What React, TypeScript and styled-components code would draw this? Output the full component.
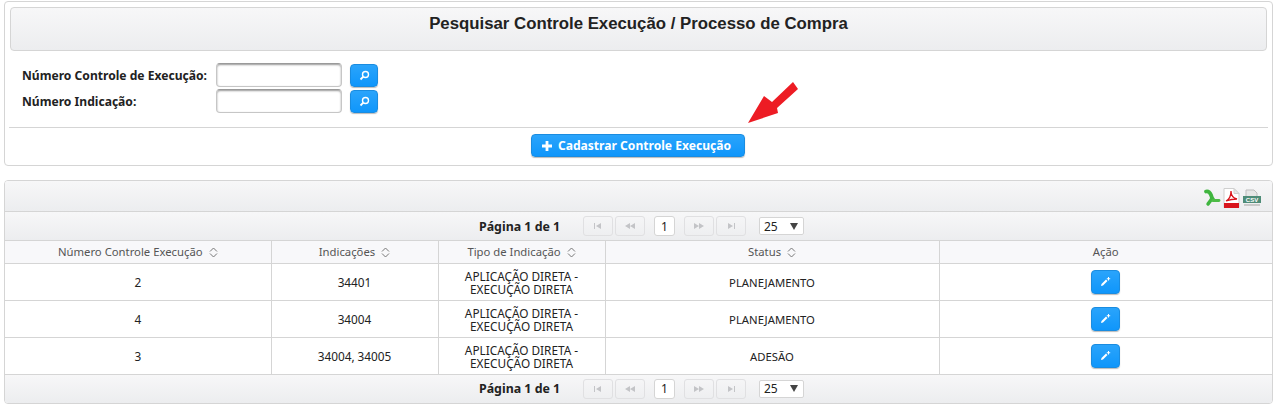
import React from "react";
import styled, { createGlobalStyle, css } from "styled-components";

const Global = createGlobalStyle`
  html, body { margin: 0; padding: 0; background: #fff; }
  body { font-family: "Noto Sans", "DejaVu Sans", sans-serif; font-size: 12px; color: #222; }
`;
const barGradient = css`background: linear-gradient(to bottom, #f7f7f8, #ecedef);`;
const blueGradient = css`background: linear-gradient(to bottom, #2aa4fb, #0f96fb);`;

const Page = styled.div`
  width: 1279px; height: 410px; padding: 1px 6px 0 4px; box-sizing: border-box; overflow: hidden;
  display: flex; flex-direction: column; gap: 14px;
`;
const SearchPanel = styled.section`
  position: relative; height: 165px; box-sizing: border-box; border: 1px solid #d5d5d5; border-radius: 4px;
  padding: 5px 5px 0 5px; display: flex; flex-direction: column;
`;
const TitleBar = styled.header`
  ${barGradient}
  height: 44px; box-sizing: border-box; border: 1px solid #d5d5d5; border-radius: 4px;
  display: flex; justify-content: center; padding-top: 6px;
`;
const Title = styled.h1`
  margin: 0; font: bold 16.8px/20px "Liberation Sans", Arial, sans-serif; color: #222;
`;
const Form = styled.div`
  display: grid; grid-template-columns: 194px 126px 30px; padding: 11px 0 0 12px;
  grid-auto-rows: 26px; align-items: center; height: 76px; box-sizing: border-box; align-content: start;
`;
const Label = styled.label`
  font-weight: 700; font-size: 12.1px; color: #222;
`;
const Input = styled.input`
  width: 126px; height: 24px; box-sizing: border-box; border: 1px solid #c6c6c6; border-top-color: #9a9a9a;
  border-radius: 4px; box-shadow: inset 0 1px 2px #999; background: #fff; padding: 0;
`;
const SearchButton = styled.button`
  ${blueGradient}
  width: 28px; height: 23px; margin-left: 8px; border: 1px solid #1a8ce0; border-radius: 4px; padding: 0;
  display: flex; align-items: center; justify-content: center; box-shadow: 0 1px 1px #bbb;
`;
const Divider = styled.hr`
  margin: 0 -1px; border: 0; border-top: 1px solid #d5d5d5;
`;
const Actions = styled.div`
  display: flex; justify-content: center; padding: 6px 2px 0 0;
`;
const PrimaryButton = styled.button`
  ${blueGradient}
  width: 214px; height: 23px; border: 1px solid #1a8ce0; border-radius: 4px; padding: 0 2px 0 0;
  display: flex; align-items: center; justify-content: center; gap: 6px; box-shadow: 0 1px 1px #bbb;
  color: #fff; font: 700 12.1px "Noto Sans", "DejaVu Sans", sans-serif;
`;
const Arrow = styled.svg`
  position: absolute; left: 738px; top: 74px; width: 60px; height: 50px;
`;
const ResultsPanel = styled.section`
  height: 224px; box-sizing: border-box; border: 1px solid #d5d5d5; border-radius: 4px; overflow: hidden;
  display: flex; flex-direction: column;
`;
const Toolbar = styled.div`
  ${barGradient}
  height: 31px; flex: none; box-sizing: border-box; border-bottom: 1px solid #d5d5d5;
  display: flex; justify-content: flex-end; align-items: center; gap: 2px; padding: 4px 10px 0 0;
`;
const Pager = styled.div<{ $bottom?: boolean }>`
  ${barGradient}
  height: ${(p) => (p.$bottom ? "28px" : "29px")}; flex: none; box-sizing: border-box;
  ${(p) => (p.$bottom ? "" : "border-bottom: 1px solid #d5d5d5;")}
  display: flex; align-items: center; padding-left: 474px;
`;
const PageInfo = styled.span`
  font-weight: 700; font-size: 12.4px; color: #222; width: 104px;
`;
const PageNav = styled.button`
  width: 30px; height: 20px; margin-right: 2px; box-sizing: border-box; border: 1px solid #e0e0e2; border-radius: 3px;
  background: transparent; padding: 0; display: flex; align-items: center; justify-content: center;
`;
const CurrentPage = styled.span`
  width: 21px; height: 20px; box-sizing: border-box; border: 1px solid #d5d5d5; border-radius: 3px; background: #fff;
  margin: 0 9px 0 7px; display: flex; align-items: center; justify-content: center; font-size: 12px; color: #222;
`;
const PageSize = styled.span`
  width: 45px; height: 18px; margin-left: 11px; box-sizing: border-box; border: 1px solid #d5d5d5; border-radius: 2px; background: #fff;
  display: flex; align-items: center; justify-content: space-between; padding: 0 5px 0 4px; font-size: 12px; color: #222;
`;
const Table = styled.table`
  width: 100%; table-layout: fixed; border-collapse: collapse; flex: none;
`;
const Th = styled.th`
  height: 22px; padding: 0; box-sizing: border-box; font-weight: 400; font-size: 11.3px; color: #555; background: #f8f8fa;
  border-right: 1px solid #d5d5d5; border-bottom: 1px solid #d5d5d5; &:last-child { border-right: 0; }
`;
const Td = styled.td`
  height: 37px; padding: 2px 0 0; box-sizing: border-box; text-align: center; font-size: 11.8px; line-height: 13px; color: #222;
  border-right: 1px solid #d5d5d5; border-bottom: 1px solid #d5d5d5; &:last-child { border-right: 0; }
`;
const Status = styled.span`
  font-size: 11.3px;
`;
const SortMark = styled.svg`
  margin-left: 6px; vertical-align: -2px;
`;
const EditButton = styled.button`
  ${blueGradient}
  width: 29px; height: 24px; margin-bottom: 2px; border: 1px solid #1a8ce0; border-radius: 4px; padding: 0;
  display: inline-flex; align-items: center; justify-content: center; vertical-align: middle; box-shadow: 0 1px 1px #bbb;
`;

const Lens = () => (
  <svg width="11" height="11" viewBox="0 0 11 11" fill="none">
    <circle cx="6.5" cy="4.5" r="3" stroke="#fff" strokeWidth="1.4" />
    <path d="M4.3 6.7 1.5 9.5" stroke="#fff" strokeWidth="1.8" />
  </svg>
);
const Sort = () => (
  <SortMark width="9" height="11" viewBox="0 0 9 11" fill="none">
    <path d="M1 4.5 4.5 1 8 4.5M1 6.5 4.5 10 8 6.5" stroke="#777" strokeWidth="1" />
  </SortMark>
);
const Pencil = () => (
  <svg width="11" height="11" viewBox="0 0 11 11" fill="none">
    <path d="M1 10 1.5 8 6 3.5 7.5 5 3 9.5Z" fill="#fff" />
    <path d="M8 1h1v1.2h1.2v1H9v1.2H8V3.2H6.8v-1H8Z" fill="#fff" />
  </svg>
);
const NavIcon = ({ d }: { d: string }) => (
  <svg width="12" height="8" viewBox="0 0 12 8"><path d={d} fill="#c3c4c7" /></svg>
);
const nav = {
  first: "M2 1h1v6H2ZM9 1v6L4 4Z",
  prev: "M6 1v6L1 4ZM11 1v6L6 4Z",
  next: "M1 1v6l5-3ZM6 1v6l5-3Z",
  last: "M3 1v6l5-3ZM9 1h1v6H9Z",
};
const Pagination = ({ bottom }: { bottom?: boolean }) => (
  <Pager $bottom={bottom}>
    <PageInfo>Página 1 de 1</PageInfo>
    <PageNav><NavIcon d={nav.first} /></PageNav>
    <PageNav><NavIcon d={nav.prev} /></PageNav>
    <CurrentPage>1</CurrentPage>
    <PageNav><NavIcon d={nav.next} /></PageNav>
    <PageNav><NavIcon d={nav.last} /></PageNav>
    <PageSize>25<svg width="8" height="7" viewBox="0 0 8 7"><path d="M0 0h8L4 7Z" fill="#444" /></svg></PageSize>
  </Pager>
);
const rows = [
  ["2", "34401", "PLANEJAMENTO"],
  ["4", "34004", "PLANEJAMENTO"],
  ["3", "34004, 34005", "ADESÃO"],
];

export default function App() {
  return (
    <Page>
      <Global />
      <SearchPanel>
        <TitleBar><Title>Pesquisar Controle Execução / Processo de Compra</Title></TitleBar>
        <Form>
          <Label>Número Controle de Execução:</Label>
          <Input />
          <SearchButton><Lens /></SearchButton>
          <Label>Número Indicação:</Label>
          <Input />
          <SearchButton><Lens /></SearchButton>
        </Form>
        <Divider />
        <Actions>
          <PrimaryButton>
            <svg width="10" height="10" viewBox="0 0 10 10"><path d="M3.6 0h2.8v3.6H10v2.8H6.4V10H3.6V6.4H0V3.6h3.6Z" fill="#fff" /></svg>
            Cadastrar Controle Execução
          </PrimaryButton>
        </Actions>
        <Arrow viewBox="0 0 60 50">
          <path d="M5 47 21 20 29 26 50 6 55 13 34 32 35 37Z" fill="#ed1c24" />
        </Arrow>
      </SearchPanel>
      <ResultsPanel>
        <Toolbar>
          <svg width="18" height="18" viewBox="0 0 18 18" fill="none">
            <path d="M3 2.500C5.500 2 7 3.500 8 6c.5 2 1 3.500 2.500 5" stroke="#3fb53f" strokeWidth="3.800" strokeLinecap="round" />
            <path d="M8.500 10c-1 2-2.500 3.500-3.500 5" stroke="#3fb53f" strokeWidth="3.400" strokeLinecap="round" />
            <path d="M10 11.500h6" stroke="#4cbb45" strokeWidth="2.800" strokeLinecap="round" />
          </svg>
          <svg width="17" height="20" viewBox="0 0 17 20">
            <path d="M1 .5h10l5 5v14H1Z" fill="#fff" stroke="#cfcfcf" />
            <path d="M11 .5v5h5Z" fill="#e6e6e6" stroke="#cfcfcf" />
            <path d="M3 13c3-1.500 5-5 5-10 0 4 2 7 6 8-4 0-7 .5-11 2Z" fill="none" stroke="#d8141c" strokeWidth="1.300" />
            <path d="M1 15h15v5H1Z" fill="#d8141c" />
          </svg>
          <svg width="20" height="18" viewBox="0 0 20 18">
            <path d="M4 1h8l3 3v5H4Z" fill="#e6e6e6" stroke="#bdbdbd" />
            <path d="M1 7h18v7H1Z" fill="#4e8c78" />
            <path d="M2 15h16v2H2Z" fill="#c9c9c9" />
            <text x="10" y="12.500" fontSize="6" fontWeight="700" textAnchor="middle" fill="#fff" fontFamily="Liberation Sans">CSV</text>
          </svg>
        </Toolbar>
        <Pagination />
        <Table>
          <colgroup>
            <col style={{ width: 266 }} /><col style={{ width: 167 }} /><col style={{ width: 167 }} /><col style={{ width: 334 }} /><col />
          </colgroup>
          <thead>
            <tr>
              <Th>Número Controle Execução<Sort /></Th>
              <Th>Indicações<Sort /></Th>
              <Th>Tipo de Indicação<Sort /></Th>
              <Th>Status<Sort /></Th>
              <Th>Ação</Th>
            </tr>
          </thead>
          <tbody>
            {rows.map((r) => (
              <tr key={r[0]}>
                <Td>{r[0]}</Td>
                <Td>{r[1]}</Td>
                <Td>APLICAÇÃO DIRETA -<br />EXECUÇÃO DIRETA</Td>
                <Td><Status>{r[2]}</Status></Td>
                <Td><EditButton><Pencil /></EditButton></Td>
              </tr>
            ))}
          </tbody>
        </Table>
        <Pagination bottom />
      </ResultsPanel>
    </Page>
  );
}
